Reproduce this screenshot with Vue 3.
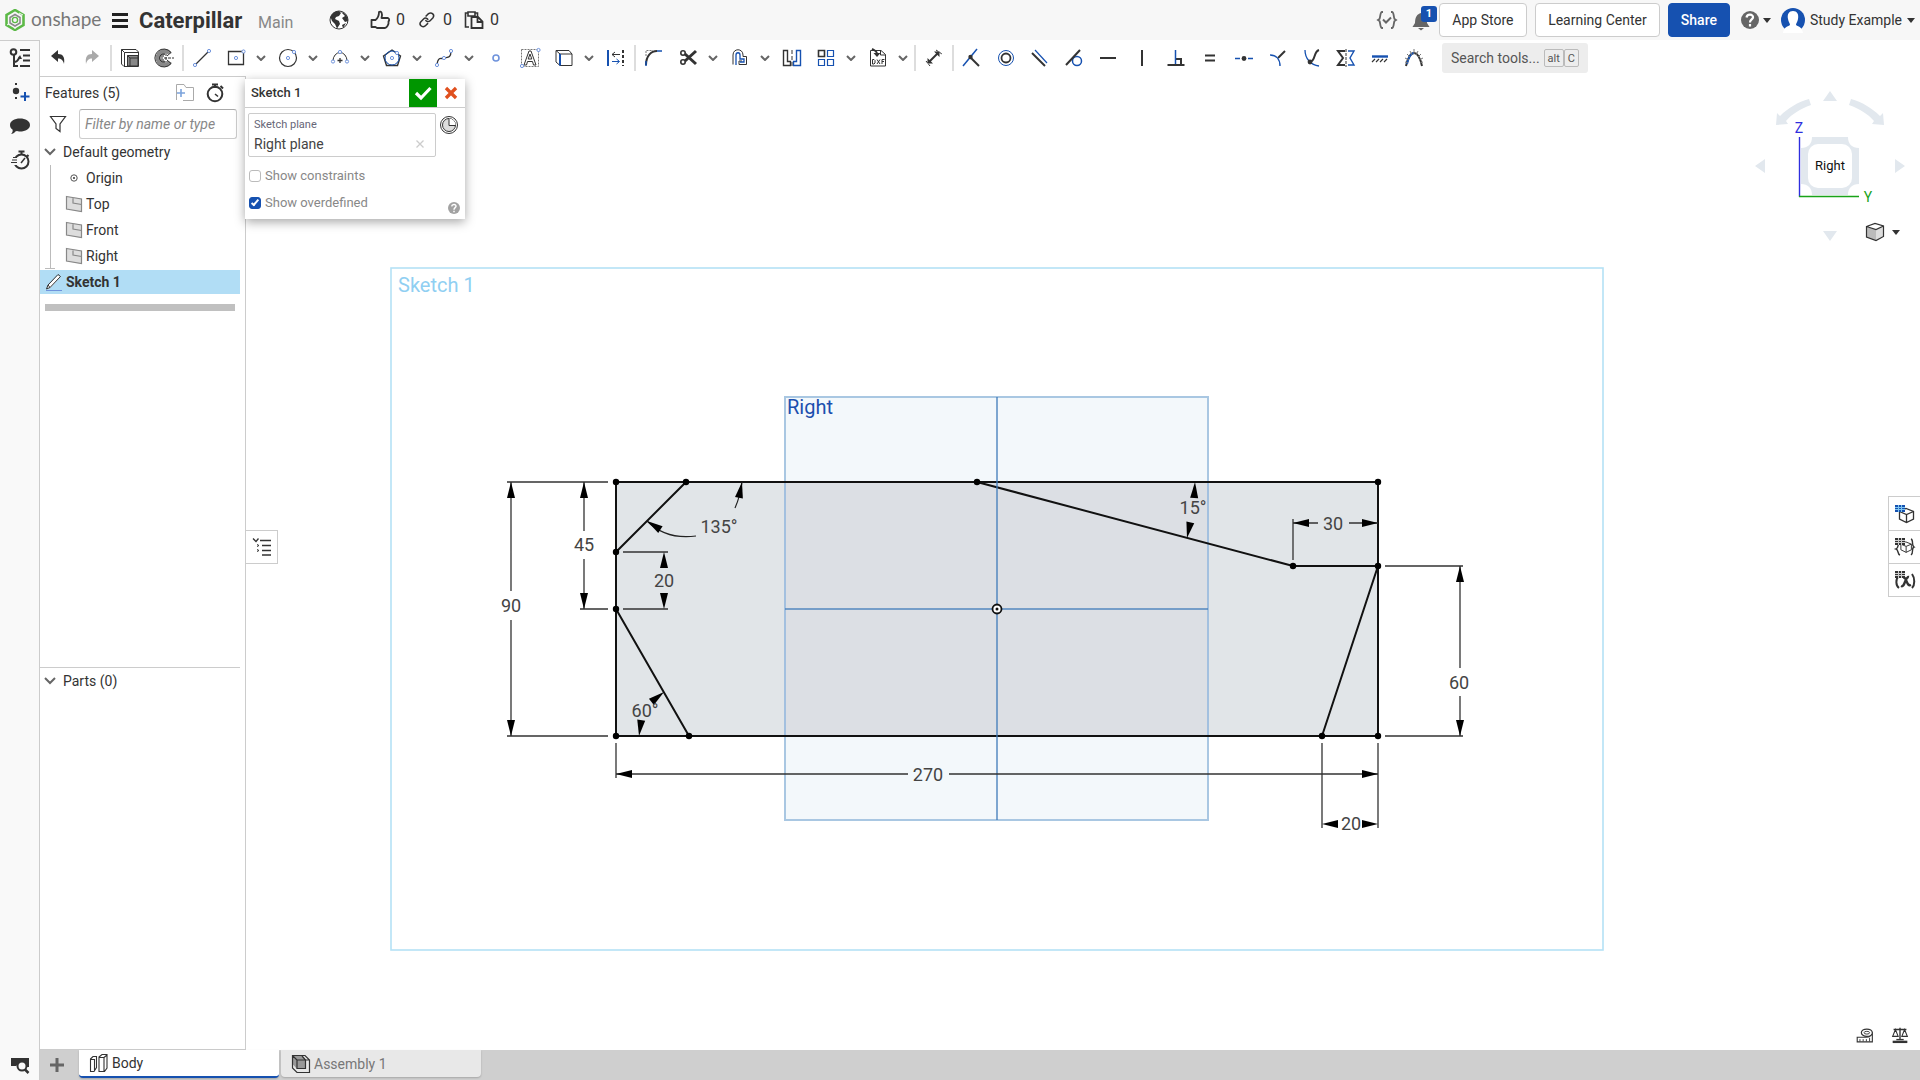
<script setup>
import { ref } from 'vue'

const K = '#333'
const B = '#1651b0'
const L = '#6f93dc'
const G = '#777'

const s = (d, c = K, w = 1, extra = '') => `<path d="${d}" fill="none" stroke="${c}" stroke-width="${w}" ${extra}/>`
const f = (d, c = K) => `<path d="${d}" fill="${c}"/>`
const dot = (x, y, r = 1.6) => `<circle cx="${x}" cy="${y}" r="${r}" fill="#fff" stroke="${L}"/>`
const table = (c, b) => `<rect x="2" y="3" width="10" height="7" fill="${c}"/>` + s('M2 5.500H12M2 7.500H12M5.500 3V10M8.500 3V10', b, 1)
const cube = s('M6.500 9.500L13 6.500L20.500 9.500V17L13.500 20.500L6.500 17ZM6.500 9.500L13.500 12.500L20.500 9.500M13.500 12.500V20.500', K, 1.3)

const icons = {
  features: `<circle cx="5.500" cy="6" r="2.800" fill="none" stroke="${K}" stroke-width="2"/>` + s('M6 9V20H10M6 16C11 16 10 12 12 11', K, 2) + s('M12 4H22M15 9.500H22M15 14.500H22M12 20H22', K, 2) + f('M10 13l2-4 2 4z'),
  insert: s('M8 3V6M8 17V20', K, 2, 'stroke-dasharray="2 1"') + `<circle cx="8" cy="11" r="3.200" fill="${K}"/>` + s('M17 12V21M12.500 16.500H21.500', B, 2),
  comment: f('M12 4.500C17.500 4.500 22 7 22 11S17.500 17.500 12 17.500C11 17.500 9 17.300 8 17C6.500 19 4.500 20 3 20C4.500 18.500 5 17 4.500 15.500C3 14.500 2 13 2 11C2 7 6.500 4.500 12 4.500Z'),
  history: `<circle cx="13.500" cy="13.500" r="7" fill="none" stroke="${K}" stroke-width="2"/>` + s('M10.500 3.500H16.500M13.500 4V7M19 7L20.500 8.500', K, 2) + s('M13 15L17 10', K, 1.5) + s('M5 10.500H9M4 13H9M3 15.500H9', '#f9f9f9', 3) + s('M5 9.500H9M4 12H9M3 14.500H9', K, 1.2),
  finder: f('M3 5H21V14H17V10H12L8 13H3Z') + `<circle cx="14" cy="13" r="4.500" fill="#f9f9f9" stroke="${K}" stroke-width="2"/>` + s('M17 16.500L20.500 20', K, 2.5),
  undo: f('M5 10L12 4V8C17 8 19 11 18 18C17 14 15 12.500 12 12.500V16Z'),
  redo: f('M19 10L12 4V8C7 8 5 11 6 18C7 14 9 12.500 12 12.500V16Z', '#aaa'),
  extrude: s('M3.500 3.500H18L20.500 6V20.500H6L3.500 18ZM3.500 3.500L6.500 6.500M6.500 20V6.500H20.500') + f('M9.500 9.500H20V20H9.500Z', '#888') + s('M9.500 9.500H20V20H9.500ZM9.500 9.500L12 12H20M12 12V20'),
  slice: f('M12 3A9 9 0 1 0 20 17L14 13.500L12 15V9L20 7A9 9 0 0 0 12 3Z', '#888') + s('M19 6.500A9 9 0 1 0 19 17.500L15 14A4 4 0 1 1 15 10Z', K, 1) + s('M8 12H22M14 7V17', '#fff', 2) + s('M8 12H22M14 7V17', K, 1, 'stroke-dasharray="3 1"'),
  line: s('M5 19L19 5', K, 1.3) + dot(5, 19) + dot(19, 5),
  rect: s('M4.500 5.500H19.500V18.500H4.500Z', K, 1.3) + dot(12, 12) + dot(19.500, 5.500),
  circle: `<circle cx="12" cy="12" r="8.500" fill="none" stroke="${K}" stroke-width="1.200"/>` + dot(12, 12) + dot(18, 6),
  arc: s('M5 15A7 8.500 0 0 1 19 15') + s('M12 12V17M9.500 14.500H14.500', K, 1.3) + dot(5, 15.500) + dot(12, 6) + dot(19, 15.500),
  polygon: s('M12 4L20.500 10L17.500 19.500H6.500L3.500 10Z', K, 1.4) + `<circle cx="12" cy="12" r="7" fill="none" stroke="${B}"/>` + dot(12, 12) + dot(17, 7),
  spline: s('M5 19C6 9 10 14 12 12C15 11 19 13 19 5', K, 1.3) + dot(5, 19) + dot(12, 12) + dot(19, 5),
  point: `<circle cx="12" cy="12" r="3" fill="#fff" stroke="${L}" stroke-width="1.600"/>`,
  text: s('M3.500 3.500H20.500V20.500H3.500Z', G, 1, 'stroke-dasharray="2 1"') + s('M6 19L11 5H13L18 19H15.500L14.500 15.500H9.500L8.500 19ZM10.200 13H13.800L12 8Z', K, 1) + dot(20.500, 4) + dot(4, 20),
  project: s('M4 4.500H17L20 8V19.500H8L4 16ZM4 4.500L8 8H20') + s('M8 8V19.500', B, 2),
  transform: s('M4 4V20', B, 2) + s('M19 4V20', K, 2, 'stroke-dasharray="3 2"') + s('M8 8.500H16M11 6L8 8.500L11 11') + s('M8 15.500H15M12.500 13L15.500 15.500L12.500 18', B),
  fillet: s('M4 10V4.500H11', G, 1, 'stroke-dasharray="2 1"') + s('M4 19C4 10 9 5 15 5', K, 2) + s('M4 15V20M15 5H20', B, 1.5),
  trim: s('M20 5L9 15M20 18L9 8', K, 3) + `<circle cx="7" cy="7" r="2.200" fill="none" stroke="${K}" stroke-width="1.600"/><circle cx="7" cy="16" r="2.200" fill="none" stroke="${K}" stroke-width="1.600"/>`,
  offset: s('M5 18.500V9C5 2 15 2 15 9V10.500H18.500V18.500H11V15H14', K, 1) + s('M8 19V9C8 6 12 6 12 9V13H16V16H12', B, 1.3),
  mirror: s('M3.500 4.500H7.500V15.500H10.500V19.500H3.500Z', K, 1.4) + s('M20.500 4.500H16.500V15.500H13.500V19.500H20.500Z', B, 1.4) + s('M12 4V20', K, 1, 'stroke-dasharray="4 2"'),
  pattern: s('M4.500 4.500H10.500V10.500H4.500Z', K, 1.6) + s('M13.500 4.500H19.500V10.500H13.500ZM4.500 13.500H10.500V19.500H4.500ZM13.500 13.500H19.500V19.500H13.500Z', B, 1.2),
  dxf: s('M4.500 20V4.500H15L19.500 8.500V20ZM14.500 4.500V9H19.500') + s('M6 3C8 4 10 4 11 7', K, 2) + f('M7.500 7H14.500L11 11Z') + s('M6.500 13.500V18H8L9 17V14.500L8 13.500ZM11 13.500L14 18M14 13.500L11 18M16 18V13.500H18.500M16 15.500H18', K, 1),
  dimension: s('M7 16L16 7', K, 2) + f('M5.500 17.500V12L11 17.500ZM17.500 5.500V11L12 5.500Z') + s('M4 15L8 20M14 4L20 8', K, 1, 'stroke-dasharray="3 1"'),
  coincident: s('M3 20L17 3', B, 1.5) + s('M11 12L19 20', K, 2) + `<circle cx="10.500" cy="11" r="2.200" fill="${K}"/>`,
  concentric: `<circle cx="12" cy="12" r="7.500" fill="none" stroke="${B}"/><circle cx="12" cy="12" r="4.500" fill="none" stroke="${K}" stroke-width="1.800"/>`,
  parallel: s('M7 4L19 17', B, 1.2) + s('M4 7L17 20', K, 2),
  tangent: `<circle cx="15" cy="15" r="4.500" fill="none" stroke="${B}" stroke-width="1.500"/>` + s('M4 19L18 4', K, 2),
  horizontal: s('M4 12H20', K, 2),
  vertical: s('M12 4V20', K, 2),
  perpendicular: s('M3.500 19H20.500M12 13H17V19', K, 2) + s('M11.500 4V18', B, 1.5),
  equal: s('M7 9.500H17M7 14.500H17', K, 2),
  midpoint: s('M3 12.500H8M16 12.500H21', B, 1.6) + `<circle cx="12" cy="12.500" r="2.400" fill="${K}"/>`,
  normal: s('M12 12L19 5', K, 2) + s('M4 9C10 9 14 13 14 20', B, 1.4),
  pierce: s('M5 4C5 13 11 19 19 20', B, 1.3) + s('M10 16C16 15 13 6 19 4', K, 2) + `<circle cx="10" cy="16" r="2.400" fill="${K}"/>`,
  symmetric: s('M11 5H4L9 12L4 19H11', K, 2) + s('M12 3V21', K, 1, 'stroke-dasharray="3 1"') + s('M14 5H20L16 12L20 19H14', B, 1.4),
  fix: s('M4 10.500H20', B, 2.4) + s('M4 16L7 13M8 16L11 13M12 16L15 13M16 16L19 13', K, 1.2),
  curvature: s('M4 20C6 11 9 7 12 7S18 11 20 20', K, 2) + s('M5 18C7 10 9 7 12 7', B, 2) + s('M3 16L6 17M3 12L7 14M5 8L8 11M8 5L10 9M12 3V8M16 5L14 9M19 8L16 11M21 12L17 14M21 16L18 17', G, 1),
  globe: `<circle cx="12" cy="12" r="9" fill="#fff" stroke="${K}" stroke-width="1"/>` + f('M3.500 9C5 5 8 3 12 3L14 5L12 8L9 9L8 11L12 13L13 16L10 20.500L8 16L5 13ZM14 4C19 5 21 9 21 13L18 14L15 10L18 8ZM15 17L19 15L16 20Z'),
  like: s('M3.500 12H7.500C10 10 11 7 11 4C13 2.500 15 5 13.500 10H20C22 11 21 13 20.500 13.500C21 16 19 20 17 20H9L7.500 19H3.500Z', K, 1.8, 'stroke-linejoin="round"'),
  link: s('M10.500 8L14 4.500C18 2 22 6 19.500 9.500L16 13C14 15 11 14 10.500 12M13.500 16L10 19.500C6 22 2 18 4.500 14.500L8 11C10 9 13 10 13.500 12', K, 1.8, 'transform="translate(2 2) scale(.82)"'),
  paste: s('M7 19H3.500V5H6M13 5H15.500V8M6 4H13V8H6Z', K, 1.6) + s('M9.500 9H16L20.500 13.500V20H9.500ZM15.500 9V14H20.500', K, 1.8),
  braces: s('M8 4H7C5 4 5.500 9 4.500 11L3 12L4.500 13C5.500 15 5 20 7 20H8M16 4H17C19 4 18.500 9 19.500 11L21 12L19.500 13C18.500 15 19 20 17 20H16', '#666', 1.8) + s('M8 11.500L11 14.500L16 9.500', '#666', 2),
  bell: f('M12 2.500V5C8 6 6 9 6 15L3.500 19H20.500L18 15C18 9 16 6 12 5ZM9 20H15L12 22.500Z', '#666'),
  help: `<circle cx="12" cy="12" r="9" fill="#666"/>` + s('M8.500 9.500C9 5.500 15.500 6 15 9.500C14.700 11.500 12 11.500 12 14.500M12 16V18.500', '#fff', 2.2),
  folder: s('M10 19.500H20.500V6.500H13L11 3.500H3.500V19', '#aaa', 1) + s('M8 8V16M4 12H12', '#7ba3dc', 1.6),
  stopwatch: `<circle cx="12" cy="13" r="7.300" fill="none" stroke="${K}" stroke-width="2"/>` + s('M9 3.500H15M12 4V7M17.500 5L20 7.500', K, 2) + s('M12 13L15 15.500', K, 1.6),
  filter: s('M4.500 4.500H19.500L14 12V19.500L10 16.500V12Z', K, 1.2),
  plane: f('M4 4.500L19.500 6.500V20L4 17Z', '#ddd') + s('M4.500 4.500L19.500 7V19.500L4.500 17ZM11 5.500V11L19.500 12.500', '#888', 1.2),
  origin: `<circle cx="12" cy="12" r="3.200" fill="none" stroke="#555"/><circle cx="12" cy="12" r="1" fill="${K}"/>`,
  pencil: f('M8 18L5 19L6 15.500L16 5L18.500 7Z', '#fff') + s('M8 17.500L4.500 19L6 15L16 4.500L18.500 6.500ZM6 15L8 17.500', K) + s('M4 20.500H20', L, 1),
  clock: `<circle cx="12" cy="12" r="8.500" fill="#fff" stroke="${K}"/><circle cx="12" cy="12" r="6.500" fill="#ddd" stroke="${K}"/>` + f('M12 5.500A6.500 6.500 0 0 1 18.500 12H12Z', '#fff') + s('M12 6V12.500H18', K),
  check: s('M5 12L10 17L19.500 7', '#fff', 3.2),
  cancel: s('M6.500 6.500L17.500 17.500M17.500 6.500L6.500 17.500', '#e0501e', 3.6),
  clear: s('M8.500 8.500L15.500 15.500M15.500 8.500L8.500 15.500', '#ccc', 1.3),
  tree: s('M3 3.500L6 6.500L8.500 3.500', K, 1.3) + s('M10 5.500H21M12 10.500H21M12 15.500H21M12 20H21', K, 1.4) + s('M7 9.500L9 10.500L7 11.500M7 14.500L9 15.500L7 16.500', K, 1),
  tableCube: cube + table(B, '#7cc4f0'),
  tableConfig: `<g transform="translate(3 2) scale(.75)">${cube}</g>` + s('M6 9C4 10 6 13 3 14C6 15 4 19 7 20M18 4C21 5 18 10 21 12C18 13 21 18 18 20', K, 1.4) + table(K, '#ccc'),
  tableVar: s('M6 8C2 11 3 18 6 20M19 6C22 10 22 17 19 20', K, 2) + s('M8 18C12 20 12 8 16 9M10 10C14 8 13 19 18 17', K, 2.4) + table(K, '#ccc'),
  tape: s('M3.500 14.500H13C17 14.500 20 12 20 9V19.500H3.500Z', K, 1.2) + `<ellipse cx="14" cy="9.500" rx="6" ry="4" fill="#fff" stroke="${K}" stroke-width="1.300"/><ellipse cx="14" cy="9.500" rx="3" ry="1.500" fill="none" stroke="${K}"/>` + s('M6.500 16.500V19M10 16.500V19M13.500 16.500V19M17 15V19'),
  scale: s('M5 6H19M12 4V17', K, 1.5) + s('M7 6L4 13.500H10ZM17 6L14 13.500H20Z', K, 1.2) + s('M4 19.500H20', K, 2.6) + s('M8 17H16', K, 1.5),
  parts: s('M3.500 8L6 5.500H9.500V16.500L7 20.500H3.500ZM3.500 8.500H7.500V20M12 6L15 3.500H20V17L17.500 20.500H12ZM12 6.500H17V20M17 6.500L20 4', K, 1.1),
  assembly: f('M3.500 3.500H13L17 8V17H8L3.500 12Z', '#999') + s('M3.500 3.500H16L20.500 8V20.500H8L3.500 16ZM3.500 3.500L8 8V16.500H16.500V8H8M16.500 8L13 4M16.500 8L20 8', K, 1.2),
  solid: f('M3.500 7L12 3.500L20.500 6L13 9.500Z', '#fff') + f('M3.500 7L13 9.500V20.500L3.500 17Z', '#bbb') + f('M13 9.500L20.500 6V16.500L13 20.500Z', '#ddd') + s('M3.500 6.500L12 3.500L20.500 6V16.500L13 20.500L3.500 17ZM3.500 6.500L13 9.500L20.500 6', K, 1.2),
}

const t = (icon, label, menu = false) => ({ icon, label, menu })
const groups = [
  [t('undo', 'Undo'), t('redo', 'Redo')],
  [t('extrude', 'Extrude'), t('slice', 'Revolve')],
  [t('line', 'Line'), t('rect', 'Rectangle', true), t('circle', 'Circle', true), t('arc', 'Arc', true), t('polygon', 'Polygon', true), t('spline', 'Spline', true), t('point', 'Point'), t('text', 'Text'), t('project', 'Use', true), t('transform', 'Construction')],
  [t('fillet', 'Fillet'), t('trim', 'Trim', true), t('offset', 'Offset', true), t('mirror', 'Mirror'), t('pattern', 'Pattern', true), t('dxf', 'Insert DXF', true)],
  [t('dimension', 'Dimension')],
  ['coincident', 'concentric', 'parallel', 'tangent', 'horizontal', 'vertical', 'perpendicular', 'equal', 'midpoint', 'normal', 'pierce', 'symmetric', 'fix', 'curvature'].map((n) => t(n, n)),
]

const geometry = [
  { name: 'Origin', icon: 'origin' },
  { name: 'Top', icon: 'plane' },
  { name: 'Front', icon: 'plane' },
  { name: 'Right', icon: 'plane' },
]
const social = [{ icon: 'like', n: 0 }, { icon: 'link', n: 0 }, { icon: 'paste', n: 0 }]

const points = [[616, 482], [686, 482], [977, 482], [1378, 482], [616, 552], [616, 609], [616, 736], [689, 736], [1322, 736], [1378, 736], [1293, 566], [1378, 566]]

const dimLines = 'M507 482H608M507 736H608M511 482V591M511 620V736M580 609H608M584 482V531M584 559V609M623 552H668M623 609H668M616 743V778M616 774H908M949 774H1378M1378 743V828M1322 743V828M1385 566H1463M1385 736H1463M1460 566V668M1460 696V736M1293 519V560M1293 523H1318M1349 523H1378'

const arrows = [
  [511, 482, 0], [511, 736, 180], [584, 482, 0], [584, 609, 180], [664, 552, 0], [664, 609, 180],
  [742, 482, 11], [647, 521, -57], [664, 692, 52], [639, 736, 188], [1195, 482, 3], [1187, 538, 192],
  [1293, 523, -90], [1378, 523, 90], [1460, 566, 0], [1460, 736, 180], [616, 774, -90], [1378, 774, 90], [1322, 824, -90], [1378, 824, 90],
]
const labels = [
  [511, 612, '90'], [584, 551, '45'], [664, 587, '20'], [719, 533, '135°'], [645, 717, '60°'], [1193, 514, '15°'],
  [1333, 530, '30'], [1459, 689, '60'], [928, 781, '270'], [1351, 830, '20'],
]

const filter = ref('')
const showConstraints = ref(false)
const showOverdefined = ref(true)
</script>

<template>
  <div class="app">
    <header class="header">
      <a class="brand" href="#">
        <svg width="20" height="22" viewBox="0 0 20 22" aria-hidden="true">
          <path d="M10 1L18.500 6V16L10 21L1.500 16V6Z" fill="none" stroke="#5cb947" stroke-width="2.600" />
          <path d="M5 14L2 16M10 20V17M14 4L18 6" stroke="#f7f7f7" stroke-width="1" />
          <path d="M10 5.500L15 8.500V14L10 17L5 14V8.500Z" fill="none" stroke="#8a8a8a" stroke-width="1.600" />
          <circle cx="10" cy="11" r="2.600" fill="none" stroke="#5cb947" stroke-width="1.400" />
        </svg>
        <span>onshape</span>
      </a>
      <button class="burger" aria-label="Menu"><i /><i /><i /></button>
      <h1 class="title">Caterpillar</h1>
      <span class="branch">Main</span>
      <svg class="ico globe" viewBox="0 0 24 24" v-html="icons.globe" />
      <button v-for="x in social" :key="x.icon" class="count" :aria-label="x.icon">
        <svg class="ico" viewBox="0 0 24 24" v-html="icons[x.icon]" /><span>{{ x.n }}</span>
      </button>
      <div class="account">
        <button class="plain" aria-label="Versions"><svg class="ico" viewBox="0 0 24 24" v-html="icons.braces" /></button>
        <button class="plain bell" aria-label="Notifications">
          <svg class="ico" viewBox="0 0 24 24" v-html="icons.bell" /><span class="badge">1</span>
        </button>
        <button class="btn store">App Store</button>
        <button class="btn learn">Learning Center</button>
        <button class="btn share">Share</button>
        <button class="plain helpmenu" aria-label="Help"><svg class="ico" viewBox="0 0 24 24" v-html="icons.help" /><i class="caret" /></button>
        <button class="plain user">
          <svg width="24" height="26" viewBox="0 0 24 26" aria-hidden="true">
            <circle cx="12" cy="13" r="12" fill="#1651b0" />
            <path d="M12 4C16 4 18 7 17 12C16.500 15 15 16 15 18C18 20 21 20 22 26H2C3 20 6 20 9 18C9 16 7.500 15 7 12C6 7 8 4 12 4Z" fill="#fff" />
          </svg>
          <span>Study Example</span><i class="caret" />
        </button>
      </div>
    </header>

    <div class="body">
      <nav class="rail">
        <button aria-label="Features"><svg class="ico" viewBox="0 0 24 24" v-html="icons.features" /></button>
        <button aria-label="Insert"><svg class="ico" viewBox="0 0 24 24" v-html="icons.insert" /></button>
        <button aria-label="Comments"><svg class="ico" viewBox="0 0 24 24" v-html="icons.comment" /></button>
        <button aria-label="History"><svg class="ico" viewBox="0 0 24 24" v-html="icons.history" /></button>
        <button class="last" aria-label="Tab manager"><svg class="ico" viewBox="0 0 24 24" v-html="icons.finder" /></button>
      </nav>

      <div class="column">
        <div class="toolbar">
          <div v-for="(g, i) in groups" :key="i" class="group">
            <template v-for="tool in g" :key="tool.icon">
              <button class="tool" :aria-label="tool.label"><svg class="ico" viewBox="0 0 24 24" v-html="icons[tool.icon]" /></button>
              <button v-if="tool.menu" class="more" :aria-label="tool.label + ' options'">
                <svg width="10" height="6" viewBox="0 0 10 6"><path d="M1 1L5 5L9 1" fill="none" stroke="#666" stroke-width="2" /></svg>
              </button>
            </template>
          </div>
          <button class="search"><span>Search tools...</span><kbd>alt</kbd><kbd>C</kbd></button>
        </div>

        <div class="workspace">
          <aside class="panel">
            <section class="features">
              <div class="panelhead">
                <h2>Features (5)</h2>
                <button class="plain" aria-label="New folder"><svg class="ico" viewBox="0 0 24 24" v-html="icons.folder" /></button>
                <button class="plain" aria-label="Regeneration times"><svg class="ico" viewBox="0 0 24 24" v-html="icons.stopwatch" /></button>
              </div>
              <div class="filter">
                <svg class="ico" viewBox="0 0 24 24" v-html="icons.filter" />
                <input v-model="filter" type="text" placeholder="Filter by name or type" aria-label="Filter by name or type" />
              </div>
              <button class="row">
                <svg width="12" height="8" viewBox="0 0 12 8"><path d="M1 1L6 6L11 1" fill="none" stroke="#666" stroke-width="2" /></svg>
                Default geometry
              </button>
              <ul class="tree">
                <li v-for="g in geometry" :key="g.name">
                  <svg class="ico" viewBox="0 0 24 24" v-html="icons[g.icon]" />{{ g.name }}
                </li>
              </ul>
              <button class="row selected"><svg class="ico" viewBox="0 0 24 24" v-html="icons.pencil" />Sketch 1</button>
              <div class="rollback" />
            </section>
            <section class="parts">
              <button class="row">
                <svg width="12" height="8" viewBox="0 0 12 8"><path d="M1 1L6 6L11 1" fill="none" stroke="#666" stroke-width="2" /></svg>
                Parts (0)
              </button>
            </section>
          </aside>

          <main class="canvas">
            <svg class="drawing" viewBox="246 76 1674 974">
              <rect x="391" y="268" width="1212" height="682" fill="#fff" stroke="#b5e1f6" stroke-width="1.600" />
              <rect x="616" y="482" width="762" height="254" fill="#e1e5e8" />
              <rect x="785" y="397" width="423" height="423" fill="#f3f8fb" stroke="#a9c7e2" stroke-width="2" />
              <rect x="785" y="482" width="423" height="254" fill="#dcdfe4" />
              <path d="M785 482V736M1208 482V736" stroke="#a3c0df" stroke-width="2" />
              <text class="sketchname" x="398" y="292">Sketch 1</text>
              <text class="planename" x="787" y="414">Right</text>
              <path d="M616 482H1378V736H616ZM686 482L616 552M616 609L689 736M977 482L1293 566H1378L1322 736" fill="none" stroke="#111" stroke-width="2" />
              <path d="M997 397V820M785 609H1208" stroke="#3d7ab8" stroke-opacity=".65" stroke-width="2" />
              <path :d="dimLines" fill="none" stroke="#333" stroke-width="1.300" />
              <path d="M647 521Q666 540 696 536M742 482Q740 497 735 508" fill="none" stroke="#222" stroke-width="1.200" />
              <path v-for="(a, i) in arrows" :key="i" d="M0 0L4 16H-4Z" fill="#000" :transform="`translate(${a[0]} ${a[1]}) rotate(${a[2]})`" />
              <circle v-for="(p, i) in points" :key="i" :cx="p[0]" :cy="p[1]" r="3.200" fill="#000" />
              <circle cx="997" cy="609" r="4.500" fill="#fff" stroke="#111" stroke-width="1.800" />
              <circle cx="997" cy="609" r="1.500" fill="#111" />
              <text v-for="(l, i) in labels" :key="i" class="dim" :x="l[0]" :y="l[1]">{{ l[2] }}</text>
            </svg>

            <form class="dialog" @submit.prevent>
              <div class="dialoghead">
                <h3>Sketch 1</h3>
                <button class="accept" aria-label="Accept"><svg class="ico" viewBox="0 0 24 24" v-html="icons.check" /></button>
                <button type="button" class="cancel" aria-label="Cancel"><svg class="ico small" viewBox="0 0 24 24" v-html="icons.cancel" /></button>
              </div>
              <div class="planerow">
                <div class="planebox">
                  <span class="caption">Sketch plane</span>
                  <span class="value">Right plane <button type="button" class="plain" aria-label="Clear"><svg class="ico" viewBox="0 0 24 24" v-html="icons.clear" /></button></span>
                </div>
                <button type="button" class="plain" aria-label="Final"><svg class="ico" viewBox="0 0 24 24" v-html="icons.clock" /></button>
              </div>
              <label class="option"><input v-model="showConstraints" type="checkbox" />Show constraints</label>
              <label class="option"><input v-model="showOverdefined" type="checkbox" />Show overdefined</label>
              <button type="button" class="plain tip" aria-label="Sketch help"><svg class="ico" viewBox="0 0 24 24" v-html="icons.help" /></button>
            </form>

            <button class="treetoggle" aria-label="Toggle feature list"><svg class="ico" viewBox="0 0 24 24" v-html="icons.tree" /></button>

            <div class="viewcube">
              <svg width="160" height="170" viewBox="1750 85 160 170">
                <g fill="#e2e8ee">
                  <path d="M1830 91L1837 101H1823ZM1755 166L1765 159V173ZM1905 166L1895 159V173ZM1830 241L1837 231H1823Z" />
                  <path d="M1812 137H1848C1848 144 1852 148 1859 148V184C1852 184 1848 188 1848 195H1812C1812 188 1808 184 1801 184V148C1808 148 1812 144 1812 137Z" />
                  <path d="M1809 99L1811 105C1800 109 1792 114 1786 121L1788 124L1776 125L1777 113L1780 116C1788 108 1798 102 1809 99ZM1851 99L1849 105C1860 109 1868 114 1874 121L1872 124L1884 125L1883 113L1880 116C1872 108 1862 102 1851 99Z" />
                </g>
                <rect x="1808" y="144" width="44" height="44" rx="10" fill="#fff" />
                <path d="M1799.500 137V197" stroke="#2e2ede" stroke-width="1.400" />
                <path d="M1799 196.500H1859" stroke="#19a319" stroke-width="1.400" />
                <text x="1799" y="133" class="axis z">Z</text>
                <text x="1868" y="202" class="axis y">Y</text>
                <text x="1830" y="170" class="face">Right</text>
              </svg>
            </div>
            <button class="plain shade" aria-label="Display style"><svg class="ico" viewBox="0 0 24 24" v-html="icons.solid" /><i class="caret" /></button>

            <div class="tables">
              <button aria-label="Custom tables"><svg class="ico" viewBox="0 0 24 24" v-html="icons.tableCube" /></button>
              <button aria-label="Configurations"><svg class="ico" viewBox="0 0 24 24" v-html="icons.tableConfig" /></button>
              <button aria-label="Variables"><svg class="ico" viewBox="0 0 24 24" v-html="icons.tableVar" /></button>
            </div>
            <div class="measure">
              <button class="plain" aria-label="Measure"><svg class="ico small" viewBox="0 0 24 24" v-html="icons.tape" /></button>
              <button class="plain" aria-label="Mass properties"><svg class="ico small" viewBox="0 0 24 24" v-html="icons.scale" /></button>
            </div>
          </main>
        </div>

        <footer class="tabs">
          <button class="add" aria-label="Insert new tab"><svg width="16" height="16" viewBox="0 0 16 16"><path d="M8 1V15M1 8H15" stroke="#666" stroke-width="3" /></svg></button>
          <button class="tab active"><svg class="ico" viewBox="0 0 24 24" v-html="icons.parts" />Body</button>
          <button class="tab"><svg class="ico" viewBox="0 0 24 24" v-html="icons.assembly" />Assembly 1</button>
        </footer>
      </div>
    </div>
  </div>
</template>

<style>
body { margin: 0; }
</style>

<style scoped>
.app { display: flex; flex-direction: column; min-height: 100vh; background: #fff; color: #333; font: 14px/20px Roboto, "Liberation Sans", sans-serif; }
.app *, .app *::before { box-sizing: border-box; }
button { font: inherit; color: inherit; background: none; border: 0; padding: 0; margin: 0; }
h1, h2, h3, ul { margin: 0; padding: 0; font: inherit; list-style: none; }
svg { display: block; flex: none; }
.ico { width: 24px; height: 24px; }
.small { width: 22px; height: 22px; }
.plain { display: flex; align-items: center; }
.caret { border: 4px solid transparent; border-top: 5px solid #333; border-bottom: 0; }

.header { height: 40px; display: flex; align-items: center; background: #f7f7f7; padding: 0 5px; }
.brand { display: flex; align-items: center; gap: 6px; width: 107px; color: #777; font: 19px/24px Lato, sans-serif; text-decoration: none; }
.brand span { padding-bottom: 2px; }
.burger { width: 16px; display: flex; flex-direction: column; gap: 3px; }
.burger i { height: 3px; background: #222; }
.title { margin-left: 11px; width: 119px; padding-top: 2px; font-size: 22px; font-weight: 700; }
.branch { width: 69px; padding-top: 6px; font-size: 16px; color: #888; }
.globe { margin-right: 17px; }
.count { display: flex; align-items: center; gap: 4px; width: 47px; font-size: 16px; }
.account { margin-left: auto; display: flex; align-items: center; }
.bell { position: relative; margin: 0 6px 0 10px; }
.badge { position: absolute; left: 12px; top: -2px; width: 16px; height: 16px; border-radius: 3px; background: #1651b0; color: #fff; font: 700 11px/16px Roboto, sans-serif; text-align: center; }
.btn { height: 34px; border: 1px solid #ccc; border-radius: 4px; background: #fff; margin-right: 8px; }
.store { width: 88px; }
.learn { width: 125px; }
.share { width: 62px; background: #1651b0; border-color: #1651b0; color: #fff; font-weight: 500; }
.helpmenu { gap: 1px; margin-right: 10px; }
.user { gap: 5px; }

.body { flex: 1; display: flex; }
.rail { width: 40px; display: flex; flex-direction: column; background: #f9f9f9; border: 1px solid #ccc; border-width: 1px 1px 0 0; }
.rail button { height: 34px; display: grid; place-items: center; }
.rail .last { margin-top: auto; height: 30px; }
.column { flex: 1; min-width: 0; display: flex; flex-direction: column; }
.toolbar { height: 36px; display: flex; align-items: center; padding-left: 1px; }
.group { display: flex; align-items: center; height: 26px; }
.group + .group { border-left: 2px solid #ddd; margin-left: 1px; padding-left: 1px; }
.tool { width: 34px; height: 26px; display: grid; place-items: center; }
.more { width: 18px; height: 26px; padding-left: 3px; }
.search { width: 146px; height: 30px; margin-left: 11px; border-radius: 3px; background: #ededed; display: flex; align-items: center; padding: 0 9px; color: #555; white-space: nowrap; }
kbd { height: 18px; border: 1px solid #bbb; border-radius: 2px; padding: 0 3px; font: 11px/17px Roboto, sans-serif; }
kbd:first-of-type { margin-left: auto; }

.workspace { flex: 1; display: flex; min-height: 0; }
.panel { width: 206px; display: flex; flex-direction: column; border: 1px solid #ccc; border-left: 0; }
.features { flex: 1; }
.panelhead { display: flex; align-items: center; height: 32px; padding: 0 18px 0 5px; gap: 6px; }
.panelhead h2 { margin-right: auto; }
.filter { display: flex; align-items: center; gap: 9px; height: 30px; padding-left: 6px; }
.filter input { width: 158px; height: 30px; border: 1px solid #ccc; border-top-color: #aaa; border-radius: 3px; padding: 0 5px; font: italic 14px/20px Roboto, sans-serif; outline: 0; }
.filter input::placeholder { color: #888; }
.row { display: flex; align-items: center; gap: 7px; width: 200px; height: 26px; padding-left: 4px; }
.tree { position: relative; height: 105px; }
.tree::before { content: ""; position: absolute; left: 5px; top: 0; width: 10px; height: 104px; border-bottom: 1px solid #bbb; background: linear-gradient(#bbb, #bbb) 5px 0 / 1px 100% no-repeat; }
.tree li { display: flex; align-items: center; height: 26px; padding-left: 22px; }
.selected { height: 24px; padding-left: 2px; gap: 0; background: #b1ddf5; font-weight: 700; }
.rollback { margin: 10px 10px 0 5px; height: 7px; background: #c0c0c0; }
.parts { width: 200px; height: 382px; border-top: 1px solid #ccc; }

.canvas { flex: 1; position: relative; min-width: 0; }
.drawing { width: 100%; height: 100%; }
.sketchname { font-size: 20px; fill: #90cff2; }
.planename { font-size: 20px; fill: #1c4fae; }
.dim { font-size: 18px; fill: #444; text-anchor: middle; }

.dialog { position: absolute; left: -1px; top: 3px; width: 220px; height: 140px; background: #fff; box-shadow: 0 3px 10px rgba(0, 0, 0, .35); color: #888; }
.dialoghead { display: flex; height: 29px; border-bottom: 1px solid #ccc; color: #333; }
.dialoghead h3 { flex: 1; padding: 4px 6px; font-size: 13px; font-weight: 500; }
.accept { width: 28px; height: 28px; background: #009600; display: grid; place-items: center; }
.cancel { width: 28px; display: grid; place-items: center; }
.planerow { display: flex; align-items: flex-start; gap: 1px; padding: 5px 3px; }
.planebox { width: 188px; height: 44px; border: 1px solid #ccc; border-radius: 2px; padding: 3px 3px 0 5px; display: flex; flex-direction: column; }
.caption { font-size: 11px; line-height: 16px; color: #667; }
.value { display: flex; align-items: center; justify-content: space-between; height: 22px; color: #444; }
.option { display: flex; align-items: center; gap: 4px; height: 27px; padding-left: 4px; font-size: 13px; }
.option input { appearance: none; width: 12px; height: 12px; margin: 0; border: 1px solid #bbb; border-radius: 3px; background: #fff; position: relative; }
.option input:checked { background: #1651b0; border-color: #1651b0; }
.option input:checked::before { content: ""; position: absolute; left: 3px; top: 0; width: 4px; height: 8px; border: solid #fff; border-width: 0 2px 2px 0; transform: rotate(40deg); }
.tip { position: absolute; right: 3px; bottom: 3px; opacity: .6; }
.tip .ico { width: 16px; height: 16px; }
.treetoggle { position: absolute; left: -1px; top: 454px; width: 33px; height: 34px; border: 1px solid #ccc; background: #fff; display: grid; place-items: center; }
.viewcube { position: absolute; right: 10px; top: 9px; }
.axis { font-size: 14px; text-anchor: middle; }
.z { fill: #2e2ede; }
.y { fill: #19a319; }
.face { font-size: 13px; text-anchor: middle; fill: #111; }
.shade { position: absolute; right: 20px; top: 144px; gap: 5px; }
.tables { position: absolute; right: 0; top: 420px; width: 32px; border: 1px solid #ccc; border-right: 0; background: #fff; }
.tables button { display: grid; place-items: center; width: 100%; height: 33px; }
.tables button + button { border-top: 1px solid #ccc; }
.measure { position: absolute; right: 9px; bottom: 4px; display: flex; gap: 13px; }

.tabs { height: 30px; display: flex; background: #cfcfcf; }
.add { width: 33px; display: grid; place-items: center; margin-right: 6px; }
.tab { width: 200px; height: 27px; display: flex; align-items: center; gap: 1px; margin-right: 2px; padding-left: 8px; background: #e8e8e8; border-radius: 0 0 4px 4px; box-shadow: 0 1px 2px rgba(0, 0, 0, .2); color: #777; }
.active { height: 28px; background: #fff; border-bottom: 2px solid #1651b0; color: #333; }
</style>
